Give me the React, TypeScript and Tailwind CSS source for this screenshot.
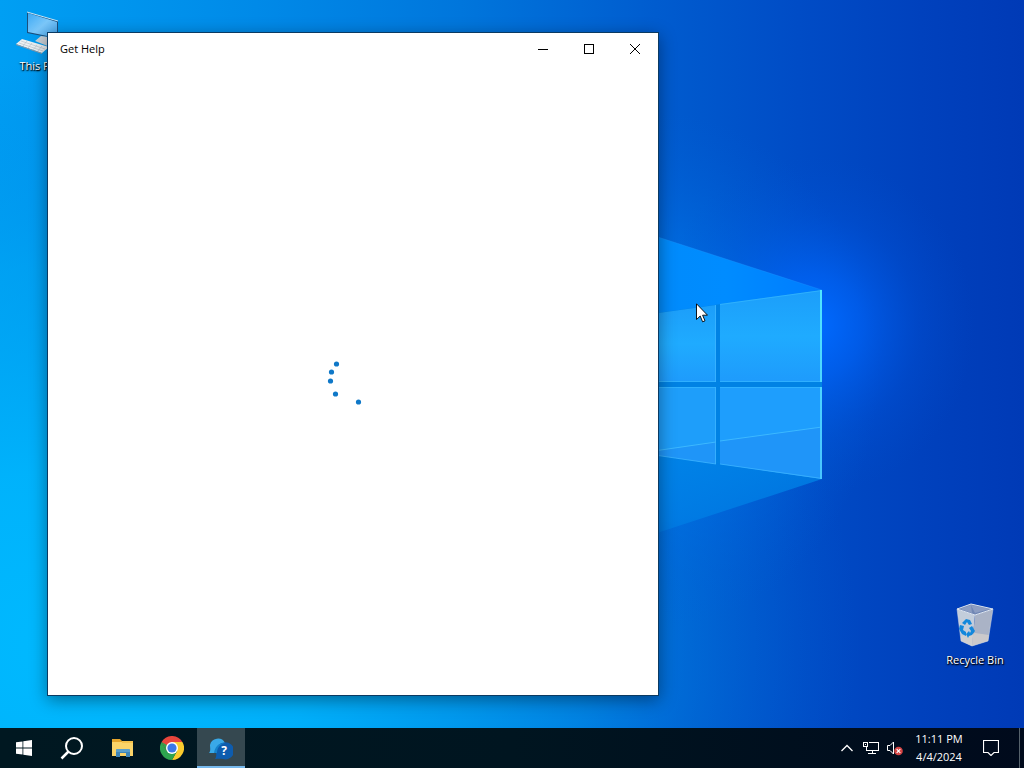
import type { ReactNode } from 'react';

const spinnerDots = [
  { cx: 28, cy: 24 },
  { cx: 23, cy: 32 },
  { cx: 22, cy: 41 },
  { cx: 27, cy: 54 },
  { cx: 50, cy: 62 },
];

function Wallpaper() {
  return (
    <svg
      className="absolute inset-0 h-full w-full"
      viewBox="0 0 1024 768"
      preserveAspectRatio="none"
      aria-hidden="true"
    >
      <defs>
        <linearGradient id="sky" x1="0" y1="0" x2="1" y2="0">
          <stop offset="0" stopColor="#009ff3" />
          <stop offset="0.25" stopColor="#008ae8" />
          <stop offset="0.45" stopColor="#0076dc" />
          <stop offset="0.64" stopColor="#005ccf" />
          <stop offset="0.78" stopColor="#004cc6" />
          <stop offset="0.9" stopColor="#0041bd" />
          <stop offset="1" stopColor="#003ab6" />
        </linearGradient>
        <radialGradient id="lowLeft" cx="0.08" cy="0.84" r="0.76">
          <stop offset="0" stopColor="#00baff" />
          <stop offset="0.3" stopColor="#00b6fd" stopOpacity="0.85" />
          <stop offset="0.65" stopColor="#00a4f2" stopOpacity="0.45" />
          <stop offset="1" stopColor="#0070dc" stopOpacity="0" />
        </radialGradient>
        <radialGradient id="haze" cx="0.5" cy="0.5" r="0.5">
          <stop offset="0" stopColor="#0084f8" stopOpacity="0.9" />
          <stop offset="0.5" stopColor="#0076ea" stopOpacity="0.5" />
          <stop offset="1" stopColor="#0060d8" stopOpacity="0" />
        </radialGradient>
        <radialGradient id="glow" cx="0.5" cy="0.5" r="0.5">
          <stop offset="0" stopColor="#006aff" />
          <stop offset="0.3" stopColor="#0064fa" stopOpacity="0.65" />
          <stop offset="0.65" stopColor="#0058e4" stopOpacity="0.25" />
          <stop offset="1" stopColor="#0050d0" stopOpacity="0" />
        </radialGradient>
        <linearGradient id="beamTop" x1="0" y1="0" x2="1" y2="0">
          <stop offset="0" stopColor="#0088f4" />
          <stop offset="0.7" stopColor="#008cff" />
          <stop offset="1" stopColor="#007cff" />
        </linearGradient>
        <linearGradient id="beamBottom" x1="0.3" y1="0" x2="0.6" y2="1">
          <stop offset="0" stopColor="#0086e8" />
          <stop offset="0.6" stopColor="#0080e6" stopOpacity="0.75" />
          <stop offset="1" stopColor="#0074de" stopOpacity="0.1" />
        </linearGradient>
        <linearGradient id="pane" x1="0" y1="0" x2="0" y2="1">
          <stop offset="0" stopColor="#1c9efa" />
          <stop offset="0.5" stopColor="#1fabff" />
          <stop offset="1" stopColor="#1e9bfc" />
        </linearGradient>
        <linearGradient id="edge" x1="0" y1="0" x2="0" y2="1">
          <stop offset="0" stopColor="#4fe6ff" />
          <stop offset="1" stopColor="#48c4ff" />
        </linearGradient>
      </defs>
      <rect width="1024" height="768" fill="url(#sky)" />
      <rect width="1024" height="768" fill="url(#lowLeft)" />
      <ellipse cx="650" cy="370" rx="230" ry="260" fill="url(#haze)" />
      <ellipse cx="815" cy="325" rx="160" ry="170" fill="url(#glow)" />
      <path d="M500 186 822 290 500 337Z" fill="url(#beamTop)" />
      <path d="M500 186 822 290" stroke="#2aa0ff" strokeOpacity="0.25" />
      <path d="M500 430 822 479 660 532 500 584Z" fill="url(#beamBottom)" />
      <path d="M500 335 822 290V479L500 432Z" fill="#0082e4" />
      <path d="M500 335 716 305V382H500Z" fill="url(#pane)" />
      <path d="M720 304 822 290V382H720Z" fill="url(#pane)" />
      <path d="M500 387H716V464L500 432Z" fill="#1e9efa" />
      <path d="M720 387H822V479L720 464Z" fill="#1e9efd" />
      <path d="M600 459 716 442V464L600 447ZM720 441 822 427V479L720 464Z" fill="#2090f6" fillOpacity="0.6" />
      <path d="M640 453 716 442M720 441 822 427" stroke="#3cb8ff" fill="none" />
      <path d="M720 304.500 822 290.500M500 381.500H716M720 381.500H822M500 387.500H716M720 387.500H822" stroke="#36b8ff" strokeOpacity="0.7" />
      <path d="M715.500 305V382M715.500 387V464M600 447 716 464M720 464 822 478.500" stroke="#3cb4ff" strokeOpacity="0.8" fill="none" />
      <path d="M820 290h2v92h-2zM820 387h2v92h-2z" fill="url(#edge)" />
    </svg>
  );
}

function ComputerIcon() {
  return (
    <svg className="h-12 w-12" viewBox="0 0 48 48" aria-hidden="true">
      <defs>
        <linearGradient id="screen" x1="0" y1="0" x2="1" y2="1">
          <stop offset="0" stopColor="#3ba8f4" />
          <stop offset="0.5" stopColor="#7cc8fa" />
          <stop offset="1" stopColor="#3fa0ea" />
        </linearGradient>
      </defs>
      <path d="M13 6 44 15V33L13 27Z" fill="#1b4f7c" />
      <path d="M14 7 43 16V32L14 26Z" fill="url(#screen)" />
      <path d="M13 6 44 15" stroke="#c4e6fa" />
      <path d="M27 30 34 31V35L42 38 36 41 21 35Z" fill="#c8ced4" />
      <path d="M8 33 35 41 28 47 2 38Z" fill="#edf0f2" />
      <path d="M2 38 28 47V48L2 39Z" fill="#8b98a4" />
      <path d="m7 35 24 8M5 37l24 8M13 35l-4 5M18 37l-4 5M23 39l-4 5M28 40l-4 5" stroke="#b2bdc6" strokeWidth="0.6" />
    </svg>
  );
}

function RecycleBinIcon() {
  return (
    <svg className="h-12 w-12" viewBox="0 0 48 48" aria-hidden="true">
      <path d="M6 9 24 15 21 46 10 41Z" fill="#c3cddb" />
      <path d="M24 15 42 9 37 41 21 46Z" fill="#aab3c6" />
      <path d="M6 9 20 4 42 9 24 15Z" fill="#7187b4" />
      <path d="M20 5 21 13 9 9ZM20 5 39 9 24 13Z" fill="#8c9dc2" />
      <path d="M10 36 24 33 38 35 37 41 21 46 10 41Z" fill="#d5d0cc" fillOpacity="0.75" />
      <path d="M6 9 20 4 42 9 24 15Z" fill="none" stroke="#dce4ee" />
      <path d="M6 9 10 41 21 46 37 41 42 9" fill="none" stroke="#d4dce6" strokeOpacity="0.5" />
      <path d="m11 23 4-4 4 1 2 4-3 1-2-3-2 3ZM9 25l4 1-1 4 3 2v4l-4-2-3-5ZM21 26l3 5-3 4-3 1-1 2-2-4 3-3 1 2 1-2-2-3Z" fill="#1388dc" />
    </svg>
  );
}

function DesktopIcon({ label, children }: { label: string; children: ReactNode }) {
  return (
    <button
      type="button"
      className="flex w-[76px] flex-col items-center gap-1 text-[11px] leading-4 whitespace-nowrap text-white [text-shadow:0_1px_2px_#000,1px_1px_1px_#000]"
    >
      {children}
      <span>{label}</span>
    </button>
  );
}

function HelpWindow() {
  return (
    <section
      aria-label="Get Help"
      className="absolute top-8 bottom-8 left-[47px] flex w-[612px] flex-col border border-[#0b3a62] bg-white shadow-[0_4px_16px_rgba(0,0,0,0.4)]"
    >
      <header className="flex h-8 shrink-0 items-center text-black">
        <h1 className="flex-1 pl-3 text-[11px]">Get Help</h1>
        <button type="button" aria-label="Minimize" className="flex h-8 w-[46px] items-center justify-center">
          <svg className="h-3 w-3" viewBox="0 0 12 12" shapeRendering="crispEdges" aria-hidden="true">
            <path d="M1 6h10v1H1z" />
          </svg>
        </button>
        <button type="button" aria-label="Maximize" className="flex h-8 w-[46px] items-center justify-center">
          <svg className="h-3 w-3" viewBox="0 0 12 12" shapeRendering="crispEdges" aria-hidden="true">
            <path d="M1 1h10v10H1zM2 2v8h8V2z" fillRule="evenodd" />
          </svg>
        </button>
        <button type="button" aria-label="Close" className="flex h-8 w-[46px] items-center justify-center">
          <svg className="h-3 w-3" viewBox="0 0 12 12" fill="none" stroke="#000" aria-hidden="true">
            <path d="m1 1 10 10M11 1 1 11" />
          </svg>
        </button>
      </header>
      <div className="flex flex-1 items-center justify-center">
        <svg className="h-20 w-[90px]" viewBox="0 0 90 80" role="img" aria-label="Loading">
          {spinnerDots.map((dot) => (
            <circle key={dot.cy} cx={dot.cx + 0.500} cy={dot.cy} r="2.600" fill="#0f78c8" />
          ))}
        </svg>
      </div>
    </section>
  );
}

function TaskbarApps() {
  return (
    <div className="flex items-stretch">
      <button type="button" aria-label="Start" className="flex w-12 items-center justify-center">
        <svg className="h-4 w-4" viewBox="0 0 16 16" fill="#fff" aria-hidden="true">
          <path d="M0 2.300 6.500 1.400V7.600H0ZM7.300 1.300 16 0V7.600H7.300ZM0 8.400H6.500V14.600L0 13.700ZM7.300 8.400H16V16L7.300 14.700Z" />
        </svg>
      </button>
      <button type="button" aria-label="Search" className="flex w-12 items-center justify-center">
        <svg className="h-6 w-6" viewBox="0 0 24 24" fill="none" stroke="#fff" strokeWidth="2" aria-hidden="true">
          <circle cx="14" cy="10" r="8" />
          <path d="M8.500 15.500 1.500 22.500" strokeWidth="2.500" />
        </svg>
      </button>
      <div className="flex gap-px pl-[3px]">
        <button type="button" aria-label="File Explorer" className="flex w-12 items-center justify-center">
          <svg className="h-6 w-6" viewBox="0 0 24 24" aria-hidden="true">
            <path d="M1 3h8l2 2h11v3H1z" fill="#e5a52c" />
            <path d="M1 6h21v14H1z" fill="#fbd469" />
            <path d="M11 5h11v2H11z" fill="#f5c24b" />
            <path d="M5 21v-7l1-1h12l1 1v7h-4v-4H9v4z" fill="#3f86b8" />
            <path d="M5 14l1-1h12l1 1v2H5z" fill="#5a9fcb" />
          </svg>
        </button>
        <button type="button" aria-label="Google Chrome" className="flex w-12 items-center justify-center">
          <svg className="h-6 w-6" viewBox="0 0 24 24" aria-hidden="true">
            <path d="M12 12 1.600 6A12 12 0 0 1 22.400 6H12Z" fill="#e8453c" />
            <path d="M12 12 22.400 6A12 12 0 0 1 12 24L17 15Z" fill="#fbcb2e" />
            <path d="M12 12 17.200 15 12 24A12 12 0 0 1 1.600 6L6.800 15Z" fill="#2ea44f" />
            <path d="M12 6H22.400L17.200 15Z" fill="#fbcb2e" />
            <path d="M1.600 6 6.800 15 12 6Z" fill="#e8453c" />
            <path d="M1.600 6 6.800 15H12V12Z" fill="#2ea44f" />
            <circle cx="12" cy="12" r="6" fill="#fff" />
            <circle cx="12" cy="12" r="4.600" fill="#3b78e7" />
          </svg>
        </button>
        <button
          type="button"
          aria-label="Get Help"
          className="flex w-12 items-center justify-center border-b-2 border-[#76b9ed] bg-[#354850] pt-0.5"
        >
          <svg className="h-6 w-6" viewBox="0 0 24 24" aria-hidden="true">
            <path d="M0 17C2 15 1 12 1 9A8 8 0 0 1 16 7C12 8 8 11 8 17Z" fill="#39a9e8" />
            <path d="M15 6.500A8.500 8.500 0 1 1 14 23C11 22.500 9 23 6 23 8 20 7 18 7 15A8.500 8.500 0 0 1 15 6.500Z" fill="#0d5cae" />
            <path d="M16 7C12 8 8 11 8 17L5 17C6 11 9 7 16 7Z" fill="#1583cc" />
            <text x="15" y="19" textAnchor="middle" fontSize="12" fontWeight="700" fill="#fff">
              ?
            </text>
          </svg>
        </button>
      </div>
    </div>
  );
}

function SystemTray() {
  return (
    <div className="flex items-stretch text-white">
      <button type="button" aria-label="Show hidden icons" className="flex w-6 items-center justify-center">
        <svg className="h-4 w-4" viewBox="0 0 16 16" fill="none" stroke="#fff" strokeWidth="1.300" aria-hidden="true">
          <path d="m2.500 11 5.500-5.500 5.500 5.500" />
        </svg>
      </button>
      <button type="button" aria-label="Network" className="flex w-6 items-center justify-center">
        <svg className="h-4 w-4" viewBox="0 0 16 16" fill="none" stroke="#fff" shapeRendering="crispEdges" aria-hidden="true">
          <path d="M5.500 2.500h10v8h-12v-4M.5 2.500h4v4h-4zM2.500 4v1M9.500 10.500v3M5 13.500h8" />
        </svg>
      </button>
      <button type="button" aria-label="Volume muted" className="flex w-6 items-center justify-center">
        <svg className="h-4 w-4" viewBox="0 0 16 16" fill="none" aria-hidden="true">
          <path d="M.5 5.500H3L6.500 2v12L3 10.500H.5Z" stroke="#fff" />
          <circle cx="11.500" cy="11" r="4.300" fill="#d64545" />
          <path d="m9.700 9.200 3.600 3.600M13.300 9.200l-3.600 3.600" stroke="#fff" strokeWidth="1.200" />
        </svg>
      </button>
      <button type="button" className="w-16 text-center text-[11px] leading-[18px] whitespace-nowrap">
        <time dateTime="2024-04-04T23:11" className="block">
          11:11 PM
          <br />
          4/4/2024
        </time>
      </button>
      <button type="button" aria-label="Notifications" className="flex w-10 items-center justify-center">
        <svg className="h-4 w-4" viewBox="0 0 16 16" fill="none" stroke="#fff" strokeWidth="1.200" aria-hidden="true">
          <path d="M.5.5h15v12H11L8 15.500 5 12.500H.5Z" />
        </svg>
      </button>
      <button type="button" aria-label="Show desktop" className="ml-2 w-[5px] border-l border-[#56626c]" />
    </div>
  );
}

function Cursor() {
  return (
    <svg className="absolute top-[303px] left-[696px] h-5 w-3" viewBox="0 0 12 20" aria-hidden="true">
      <path d="M.5.800V16.500L4.200 13 6.600 18.800 9 17.800 6.600 12.200H11.500Z" fill="#fff" stroke="#000" strokeWidth="0.900" />
    </svg>
  );
}

export default function App() {
  return (
    <div className="relative flex h-screen flex-col overflow-hidden font-['Open_Sans','Noto_Sans',sans-serif]">
      <Wallpaper />
      <main className="relative flex-1">
        <div className="absolute top-[6px] left-0">
          <DesktopIcon label="This PC">
            <ComputerIcon />
          </DesktopIcon>
        </div>
        <div className="absolute right-[11px] bottom-[60px]">
          <DesktopIcon label="Recycle Bin">
            <RecycleBinIcon />
          </DesktopIcon>
        </div>
        <HelpWindow />
        <Cursor />
      </main>
      <footer className="relative flex h-10 shrink-0 justify-between bg-linear-to-r from-[#001821] via-[#001520] to-[#000a1c]">
        <TaskbarApps />
        <SystemTray />
      </footer>
    </div>
  );
}
